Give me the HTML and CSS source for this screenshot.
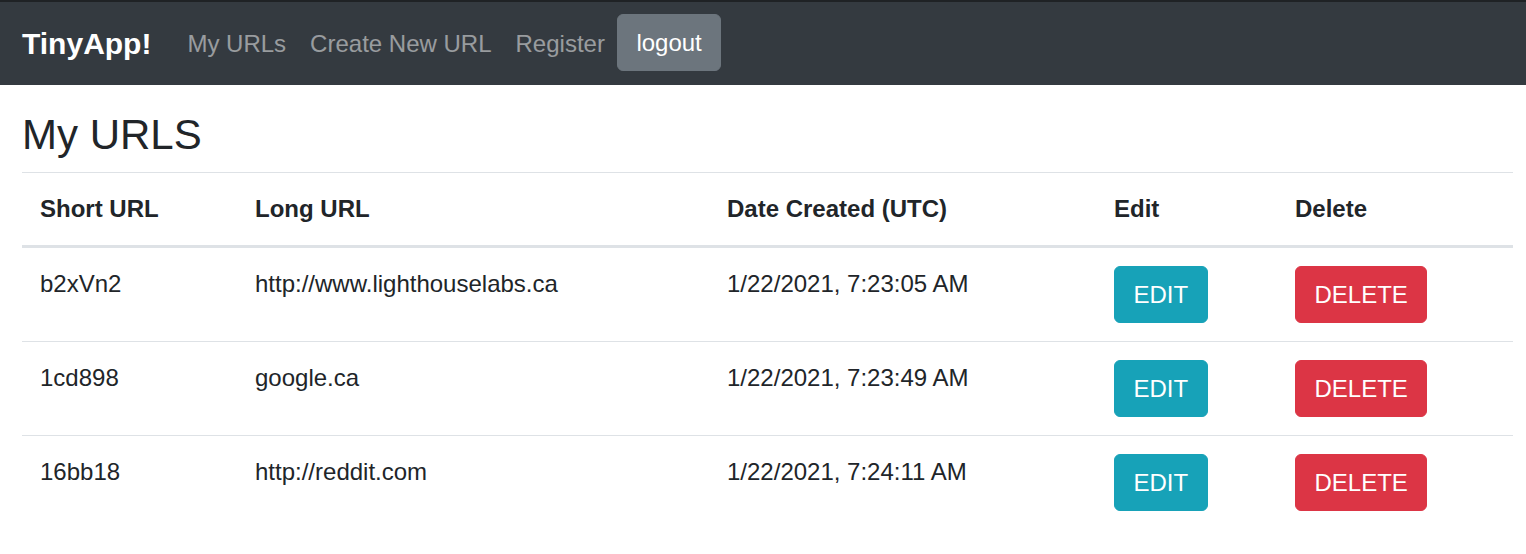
FILE: index.html
```html
<!DOCTYPE html>
<html>
<head>
<meta charset="utf-8">
<title>TinyApp</title>
<link rel="stylesheet" href="styles.css">
</head>
<body>
<nav class="navbar">
  <a class="brand" href="#">TinyApp!</a>
  <a class="nav-link" href="#">My URLs</a>
  <a class="nav-link" href="#">Create New URL</a>
  <a class="nav-link" href="#">Register</a>
  <button class="btn btn-secondary">logout</button>
</nav>
<main class="content">
  <h3 class="title">My URLS</h3>
  <table class="urls">
    <colgroup>
      <col class="c1"><col class="c2"><col class="c3"><col class="c4"><col class="c5">
    </colgroup>
    <thead>
      <tr><th>Short URL</th><th>Long URL</th><th>Date Created (UTC)</th><th>Edit</th><th>Delete</th></tr>
    </thead>
    <tbody>
      <tr>
        <td>b2xVn2</td><td>http://www.lighthouselabs.ca</td><td>1/22/2021, 7:23:05 AM</td>
        <td><button class="btn btn-info">EDIT</button></td>
        <td><button class="btn btn-danger">DELETE</button></td>
      </tr>
      <tr>
        <td>1cd898</td><td>google.ca</td><td>1/22/2021, 7:23:49 AM</td>
        <td><button class="btn btn-info">EDIT</button></td>
        <td><button class="btn btn-danger">DELETE</button></td>
      </tr>
      <tr>
        <td>16bb18</td><td>http://reddit.com</td><td>1/22/2021, 7:24:11 AM</td>
        <td><button class="btn btn-info">EDIT</button></td>
        <td><button class="btn btn-danger">DELETE</button></td>
      </tr>
    </tbody>
  </table>
</main>
</body>
</html>
```
FILE: styles.css
```css
html, body {
  margin: 0;
  padding: 0;
}
body {
  font-family: "Liberation Sans", Arial, sans-serif;
  font-size: 24px;
  line-height: 1.5;
  color: #212529;
  background: #fff;
  border-top: 2px solid #1f2225;
}
.navbar {
  display: flex;
  align-items: center;
  height: 83px;
  box-sizing: border-box;
  padding: 12px 22px;
  background: #343a40;
}
.brand {
  font-size: 30px;
  font-weight: bold;
  line-height: 45px;
  padding: 7px 0;
  margin-right: 24px;
  color: #fff;
  text-decoration: none;
}
.nav-link {
  padding: 12px 12px;
  line-height: 36px;
  color: rgba(255, 255, 255, 0.5);
  text-decoration: none;
}
.btn {
  font-family: "Liberation Sans", Arial, sans-serif;
  font-size: 24px;
  line-height: 36px;
  padding: 9.5px 18.5px;
  border: 1px solid transparent;
  border-radius: 6px;
  color: #fff;
  cursor: pointer;
}
.btn-secondary {
  background: #6c757d;
  border-color: #6c757d;
  margin-top: -2px;
}
.btn-info {
  background: #17a2b8;
  border-color: #17a2b8;
}
.btn-danger {
  background: #dc3545;
  border-color: #dc3545;
}
.content {
  padding: 0 13px 0 22px;
}
.title {
  font-size: 42px;
  font-weight: 500;
  line-height: 1.2;
  margin: 25px 0 12px;
}
.urls {
  width: 1491px;
  border-collapse: collapse;
  table-layout: fixed;
}
.c1 { width: 215px; }
.c2 { width: 472px; }
.c3 { width: 387px; }
.c4 { width: 181px; }
.c5 { width: 236px; }
.urls th,
.urls td {
  text-align: left;
  vertical-align: top;
  padding: 18px;
  border-top: 1px solid #dee2e6;
  white-space: nowrap;
}
.urls th {
  font-weight: bold;
  border-bottom: 3px solid #dee2e6;
}
.urls td {
  line-height: 36px;
}
```
